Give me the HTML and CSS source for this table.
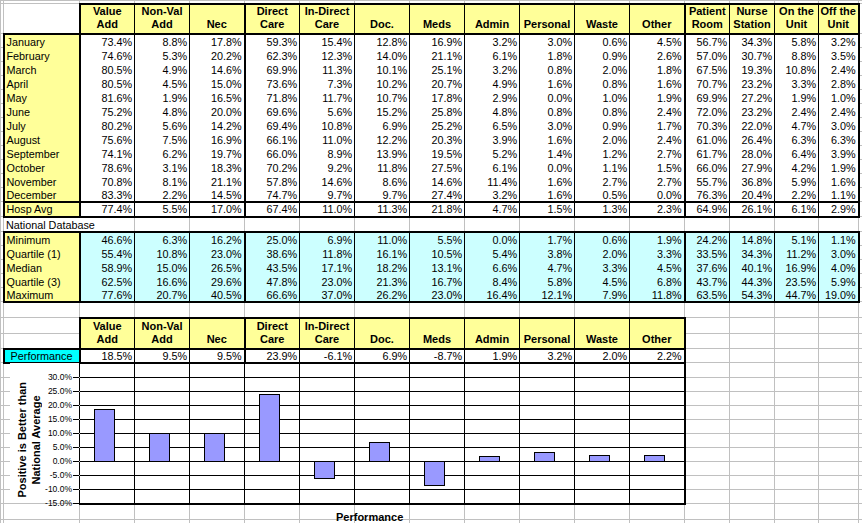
FILE: index.html
```html
<!DOCTYPE html>
<html>
<head>
<meta charset="utf-8">
<link rel="stylesheet" href="styles.css">
</head>
<body>
<div class="sheet">
<table class="grid">
<colgroup><col class="c0"><col class="ca"><col class="cb"><col class="cb"><col class="cb"><col class="cb"><col class="cb"><col class="cb"><col class="cb"><col class="cb"><col class="cb"><col class="cb"><col class="cb"><col class="cm"><col class="cm"><col class="co"><col class="cp"><col class="cq"></colgroup>
<tr class="r0"><td></td><td></td><td></td><td></td><td></td><td></td><td></td><td></td><td></td><td></td><td></td><td></td><td></td><td></td><td></td><td></td><td></td><td></td></tr>
<tr class="h1"><td></td><td></td><td class="h k">Value<br>Add</td><td class="h">Non-Val<br>Add</td><td class="h">Nec</td><td class="h k">Direct<br>Care</td><td class="h">In-Direct<br>Care</td><td class="h">Doc.</td><td class="h">Meds</td><td class="h">Admin</td><td class="h">Personal</td><td class="h">Waste</td><td class="h">Other</td><td class="h k">Patient<br>Room</td><td class="h">Nurse<br>Station</td><td class="h">On the<br>Unit</td><td class="h e">Off the<br>Unit</td><td></td></tr>
<tr class="rm first"><td></td><td class="lab">January</td><td class="n">73.4%</td><td class="n">8.8%</td><td class="n">17.8%</td><td class="n k">59.3%</td><td class="n">15.4%</td><td class="n">12.8%</td><td class="n">16.9%</td><td class="n">3.2%</td><td class="n">3.0%</td><td class="n">0.6%</td><td class="n">4.5%</td><td class="n k">56.7%</td><td class="n">34.3%</td><td class="n">5.8%</td><td class="n e">3.2%</td><td></td></tr>
<tr class="rm"><td></td><td class="lab">February</td><td class="n">74.6%</td><td class="n">5.3%</td><td class="n">20.2%</td><td class="n k">62.3%</td><td class="n">12.3%</td><td class="n">14.0%</td><td class="n">21.1%</td><td class="n">6.1%</td><td class="n">1.8%</td><td class="n">0.9%</td><td class="n">2.6%</td><td class="n k">57.0%</td><td class="n">30.7%</td><td class="n">8.8%</td><td class="n e">3.5%</td><td></td></tr>
<tr class="rm"><td></td><td class="lab">March</td><td class="n">80.5%</td><td class="n">4.9%</td><td class="n">14.6%</td><td class="n k">69.9%</td><td class="n">11.3%</td><td class="n">10.1%</td><td class="n">25.1%</td><td class="n">3.2%</td><td class="n">0.8%</td><td class="n">2.0%</td><td class="n">1.8%</td><td class="n k">67.5%</td><td class="n">19.3%</td><td class="n">10.8%</td><td class="n e">2.4%</td><td></td></tr>
<tr class="rm"><td></td><td class="lab">April</td><td class="n">80.5%</td><td class="n">4.5%</td><td class="n">15.0%</td><td class="n k">73.6%</td><td class="n">7.3%</td><td class="n">10.2%</td><td class="n">20.7%</td><td class="n">4.9%</td><td class="n">1.6%</td><td class="n">0.8%</td><td class="n">1.6%</td><td class="n k">70.7%</td><td class="n">23.2%</td><td class="n">3.3%</td><td class="n e">2.8%</td><td></td></tr>
<tr class="rm"><td></td><td class="lab">May</td><td class="n">81.6%</td><td class="n">1.9%</td><td class="n">16.5%</td><td class="n k">71.8%</td><td class="n">11.7%</td><td class="n">10.7%</td><td class="n">17.8%</td><td class="n">2.9%</td><td class="n">0.0%</td><td class="n">1.0%</td><td class="n">1.9%</td><td class="n k">69.9%</td><td class="n">27.2%</td><td class="n">1.9%</td><td class="n e">1.0%</td><td></td></tr>
<tr class="rm"><td></td><td class="lab">June</td><td class="n">75.2%</td><td class="n">4.8%</td><td class="n">20.0%</td><td class="n k">69.6%</td><td class="n">5.6%</td><td class="n">15.2%</td><td class="n">25.8%</td><td class="n">4.8%</td><td class="n">0.8%</td><td class="n">0.8%</td><td class="n">2.4%</td><td class="n k">72.0%</td><td class="n">23.2%</td><td class="n">2.4%</td><td class="n e">2.4%</td><td></td></tr>
<tr class="rm"><td></td><td class="lab">July</td><td class="n">80.2%</td><td class="n">5.6%</td><td class="n">14.2%</td><td class="n k">69.4%</td><td class="n">10.8%</td><td class="n">6.9%</td><td class="n">25.2%</td><td class="n">6.5%</td><td class="n">3.0%</td><td class="n">0.9%</td><td class="n">1.7%</td><td class="n k">70.3%</td><td class="n">22.0%</td><td class="n">4.7%</td><td class="n e">3.0%</td><td></td></tr>
<tr class="rm"><td></td><td class="lab">August</td><td class="n">75.6%</td><td class="n">7.5%</td><td class="n">16.9%</td><td class="n k">66.1%</td><td class="n">11.0%</td><td class="n">12.2%</td><td class="n">20.3%</td><td class="n">3.9%</td><td class="n">1.6%</td><td class="n">2.0%</td><td class="n">2.4%</td><td class="n k">61.0%</td><td class="n">26.4%</td><td class="n">6.3%</td><td class="n e">6.3%</td><td></td></tr>
<tr class="rm"><td></td><td class="lab">September</td><td class="n">74.1%</td><td class="n">6.2%</td><td class="n">19.7%</td><td class="n k">66.0%</td><td class="n">8.9%</td><td class="n">13.9%</td><td class="n">19.5%</td><td class="n">5.2%</td><td class="n">1.4%</td><td class="n">1.2%</td><td class="n">2.7%</td><td class="n k">61.7%</td><td class="n">28.0%</td><td class="n">6.4%</td><td class="n e">3.9%</td><td></td></tr>
<tr class="rm"><td></td><td class="lab">October</td><td class="n">78.6%</td><td class="n">3.1%</td><td class="n">18.3%</td><td class="n k">70.2%</td><td class="n">9.2%</td><td class="n">11.8%</td><td class="n">27.5%</td><td class="n">6.1%</td><td class="n">0.0%</td><td class="n">1.1%</td><td class="n">1.5%</td><td class="n k">66.0%</td><td class="n">27.9%</td><td class="n">4.2%</td><td class="n e">1.9%</td><td></td></tr>
<tr class="rm"><td></td><td class="lab">November</td><td class="n">70.8%</td><td class="n">8.1%</td><td class="n">21.1%</td><td class="n k">57.8%</td><td class="n">14.6%</td><td class="n">8.6%</td><td class="n">14.6%</td><td class="n">11.4%</td><td class="n">1.6%</td><td class="n">2.7%</td><td class="n">2.7%</td><td class="n k">55.7%</td><td class="n">36.8%</td><td class="n">5.9%</td><td class="n e">1.6%</td><td></td></tr>
<tr class="rm last"><td></td><td class="lab">December</td><td class="n">83.3%</td><td class="n">2.2%</td><td class="n">14.5%</td><td class="n k">74.7%</td><td class="n">9.7%</td><td class="n">9.7%</td><td class="n">27.4%</td><td class="n">3.2%</td><td class="n">1.6%</td><td class="n">0.5%</td><td class="n">0.0%</td><td class="n k">76.3%</td><td class="n">20.4%</td><td class="n">2.2%</td><td class="n e">1.1%</td><td></td></tr>
<tr class="avg first last"><td></td><td class="lab">Hosp Avg</td><td class="n">77.4%</td><td class="n">5.5%</td><td class="n">17.0%</td><td class="n k">67.4%</td><td class="n">11.0%</td><td class="n">11.3%</td><td class="n">21.8%</td><td class="n">4.7%</td><td class="n">1.5%</td><td class="n">1.3%</td><td class="n">2.3%</td><td class="n k">64.9%</td><td class="n">26.1%</td><td class="n">6.1%</td><td class="n e">2.9%</td><td></td></tr>
<tr class="ndb"><td></td><td colspan="2" class="t">National Database</td><td></td><td></td><td></td><td></td><td></td><td></td><td></td><td></td><td></td><td></td><td></td><td></td><td></td><td></td><td></td></tr>
<tr class="nat first"><td></td><td class="lab">Minimum</td><td class="n">46.6%</td><td class="n">6.3%</td><td class="n">16.2%</td><td class="n k">25.0%</td><td class="n">6.9%</td><td class="n">11.0%</td><td class="n">5.5%</td><td class="n">0.0%</td><td class="n">1.7%</td><td class="n">0.6%</td><td class="n">1.9%</td><td class="n k">24.2%</td><td class="n">14.8%</td><td class="n">5.1%</td><td class="n e">1.1%</td><td></td></tr>
<tr class="nat"><td></td><td class="lab">Quartile (1)</td><td class="n">55.4%</td><td class="n">10.8%</td><td class="n">23.0%</td><td class="n k">38.6%</td><td class="n">11.8%</td><td class="n">16.1%</td><td class="n">10.5%</td><td class="n">5.4%</td><td class="n">3.8%</td><td class="n">2.0%</td><td class="n">3.3%</td><td class="n k">33.5%</td><td class="n">34.3%</td><td class="n">11.2%</td><td class="n e">3.0%</td><td></td></tr>
<tr class="nat"><td></td><td class="lab">Median</td><td class="n">58.9%</td><td class="n">15.0%</td><td class="n">26.5%</td><td class="n k">43.5%</td><td class="n">17.1%</td><td class="n">18.2%</td><td class="n">13.1%</td><td class="n">6.6%</td><td class="n">4.7%</td><td class="n">3.3%</td><td class="n">4.5%</td><td class="n k">37.6%</td><td class="n">40.1%</td><td class="n">16.9%</td><td class="n e">4.0%</td><td></td></tr>
<tr class="nat"><td></td><td class="lab">Quartile (3)</td><td class="n">62.5%</td><td class="n">16.6%</td><td class="n">29.6%</td><td class="n k">47.8%</td><td class="n">23.0%</td><td class="n">21.3%</td><td class="n">16.7%</td><td class="n">8.4%</td><td class="n">5.8%</td><td class="n">4.5%</td><td class="n">6.8%</td><td class="n k">43.7%</td><td class="n">44.3%</td><td class="n">23.5%</td><td class="n e">5.9%</td><td></td></tr>
<tr class="nat last"><td></td><td class="lab">Maximum</td><td class="n">77.6%</td><td class="n">20.7%</td><td class="n">40.5%</td><td class="n k">66.6%</td><td class="n">37.0%</td><td class="n">26.2%</td><td class="n">23.0%</td><td class="n">16.4%</td><td class="n">12.1%</td><td class="n">7.9%</td><td class="n">11.8%</td><td class="n k">63.5%</td><td class="n">54.3%</td><td class="n">44.7%</td><td class="n e">19.0%</td><td></td></tr>
<tr class="blank"><td></td><td></td><td></td><td></td><td></td><td></td><td></td><td></td><td></td><td></td><td></td><td></td><td></td><td></td><td></td><td></td><td></td><td></td></tr>
<tr class="h2a"><td></td><td></td><td rowspan="2" class="h k">Value<br>Add</td><td rowspan="2" class="h">Non-Val<br>Add</td><td rowspan="2" class="h">Nec</td><td rowspan="2" class="h k">Direct<br>Care</td><td rowspan="2" class="h">In-Direct<br>Care</td><td rowspan="2" class="h">Doc.</td><td rowspan="2" class="h">Meds</td><td rowspan="2" class="h">Admin</td><td rowspan="2" class="h">Personal</td><td rowspan="2" class="h">Waste</td><td rowspan="2" class="h e">Other</td><td></td><td></td><td></td><td></td><td></td></tr>
<tr class="h2b"><td></td><td></td><td></td><td></td><td></td><td></td><td></td></tr>
<tr class="pfr"><td></td><td class="pf">Performance</td><td class="n">18.5%</td><td class="n">9.5%</td><td class="n">9.5%</td><td class="n k">23.9%</td><td class="n">-6.1%</td><td class="n">6.9%</td><td class="n">-8.7%</td><td class="n">1.9%</td><td class="n">3.2%</td><td class="n">2.0%</td><td class="n e">2.2%</td><td></td><td></td><td></td><td></td><td></td></tr>
<tr class="cr0"><td></td><td class="ax"></td><td class="cb"></td><td class="cb"></td><td class="cb"></td><td class="cb"></td><td class="cb"></td><td class="cb"></td><td class="cb"></td><td class="cb"></td><td class="cb"></td><td class="cb"></td><td class="cb e"></td><td></td><td></td><td></td><td></td><td></td></tr>
<tr class="cr"><td></td><td class="ax"></td><td class="cb"></td><td class="cb"></td><td class="cb"></td><td class="cb"></td><td class="cb"></td><td class="cb"></td><td class="cb"></td><td class="cb"></td><td class="cb"></td><td class="cb"></td><td class="cb e"></td><td></td><td></td><td></td><td></td><td></td></tr>
<tr class="cr"><td></td><td class="ax"></td><td class="cb"></td><td class="cb"></td><td class="cb"></td><td class="cb"></td><td class="cb"></td><td class="cb"></td><td class="cb"></td><td class="cb"></td><td class="cb"></td><td class="cb"></td><td class="cb e"></td><td></td><td></td><td></td><td></td><td></td></tr>
<tr class="cr"><td></td><td class="ax"></td><td class="cb"></td><td class="cb"></td><td class="cb"></td><td class="cb"></td><td class="cb"></td><td class="cb"></td><td class="cb"></td><td class="cb"></td><td class="cb"></td><td class="cb"></td><td class="cb e"></td><td></td><td></td><td></td><td></td><td></td></tr>
<tr class="cr"><td></td><td class="ax"></td><td class="cb"></td><td class="cb"></td><td class="cb"></td><td class="cb"></td><td class="cb"></td><td class="cb"></td><td class="cb"></td><td class="cb"></td><td class="cb"></td><td class="cb"></td><td class="cb e"></td><td></td><td></td><td></td><td></td><td></td></tr>
<tr class="cr"><td></td><td class="ax"></td><td class="cb"></td><td class="cb"></td><td class="cb"></td><td class="cb"></td><td class="cb"></td><td class="cb"></td><td class="cb"></td><td class="cb"></td><td class="cb"></td><td class="cb"></td><td class="cb e"></td><td></td><td></td><td></td><td></td><td></td></tr>
<tr class="cr"><td></td><td class="ax"></td><td class="cb"></td><td class="cb"></td><td class="cb"></td><td class="cb"></td><td class="cb"></td><td class="cb"></td><td class="cb"></td><td class="cb"></td><td class="cb"></td><td class="cb"></td><td class="cb e"></td><td></td><td></td><td></td><td></td><td></td></tr>
<tr class="cr"><td></td><td class="ax"></td><td class="cb"></td><td class="cb"></td><td class="cb"></td><td class="cb"></td><td class="cb"></td><td class="cb"></td><td class="cb"></td><td class="cb"></td><td class="cb"></td><td class="cb"></td><td class="cb e"></td><td></td><td></td><td></td><td></td><td></td></tr>
<tr class="cr"><td></td><td class="ax"></td><td class="cb"></td><td class="cb"></td><td class="cb"></td><td class="cb"></td><td class="cb"></td><td class="cb"></td><td class="cb"></td><td class="cb"></td><td class="cb"></td><td class="cb"></td><td class="cb e"></td><td></td><td></td><td></td><td></td><td></td></tr>
<tr class="cr cl"><td></td><td class="ax"></td><td class="cb"></td><td class="cb"></td><td class="cb"></td><td class="cb"></td><td class="cb"></td><td class="cb"></td><td class="cb"></td><td class="cb"></td><td class="cb"></td><td class="cb"></td><td class="cb e"></td><td></td><td></td><td></td><td></td><td></td></tr>
<tr class="tail"><td></td><td></td><td></td><td></td><td></td><td></td><td></td><td></td><td></td><td></td><td></td><td></td><td></td><td></td><td></td><td></td><td></td><td></td></tr>
<tr class="tail2"><td></td><td></td><td></td><td></td><td></td><td></td><td></td><td></td><td></td><td></td><td></td><td></td><td></td><td></td><td></td><td></td><td></td><td></td></tr>
</table>

<div class="chart">
  <div class="chart-body">
    <div class="axis">
      <div class="ytitle">Positive is Better than<br>National Average</div>
      <div class="ylabels">
        <span>30.0%</span><span>25.0%</span><span>20.0%</span><span>15.0%</span><span>10.0%</span><span>5.0%</span><span>0.0%</span><span>-5.0%</span><span>-10.0%</span><span>-15.0%</span>
      </div>
    </div>
    <div class="plot">
      <div class="slot"><div class="bar" style="top:32px;height:53px"></div></div>
      <div class="slot"><div class="bar" style="top:56px;height:29px"></div></div>
      <div class="slot"><div class="bar" style="top:56px;height:29px"></div></div>
      <div class="slot"><div class="bar" style="top:17px;height:68px"></div></div>
      <div class="slot"><div class="bar" style="top:84px;height:18px"></div></div>
      <div class="slot"><div class="bar" style="top:65px;height:20px"></div></div>
      <div class="slot"><div class="bar" style="top:84px;height:25px"></div></div>
      <div class="slot"><div class="bar" style="top:79px;height:6px"></div></div>
      <div class="slot"><div class="bar" style="top:75px;height:10px"></div></div>
      <div class="slot"><div class="bar" style="top:78px;height:7px"></div></div>
      <div class="slot"><div class="bar" style="top:78px;height:7px"></div></div>
    </div>
  </div>
  <div class="xtitle">Performance</div>
</div>
</div>
</body>
</html>
```

FILE: styles.css
```css
* { box-sizing: border-box; }
html, body { margin: 0; padding: 0; background: #fff; }
body { width: 862px; height: 523px; overflow: hidden; font-family: "Liberation Sans", Arial, sans-serif; color: #000; }
.sheet { position: relative; width: 862px; height: 523px; overflow: hidden; }

.grid { border-collapse: collapse; table-layout: fixed; width: 868px; font-size: 10.8px; }
.c0 { width: 3px; }
.ca { width: 76px; }
.cb { width: 55px; }
.cm { width: 45px; }
.co { width: 44px; }
.cp { width: 40px; }
.cq { width: 10px; }

.grid td { border: 1px solid #c0c0c0; padding: 0; line-height: 12px; white-space: nowrap; vertical-align: bottom; overflow: hidden; }

.r0 { height: 3px; }
.h1 { height: 30px; }
.rm { height: 14px; }
.avg { height: 15px; }
.ndb { height: 15px; }
.nat { height: 14px; }
.blank { height: 16px; }
.h2a { height: 16px; }
.h2b { height: 15px; }
.pfr { height: 14px; }
.cr0 { height: 15px; }
.cr { height: 14px; }
.tail { height: 16px; }
.tail2 { height: 14px; }

.grid td.h { background: #ffff99; font-weight: bold; font-size: 11px; text-align: center; line-height: 13.5px; padding-bottom: 1px; border-top: 2px solid #000; border-bottom: 2px solid #000; border-left: 1px solid #000; border-right: 1px solid #000; }
.grid td.lab { background: #ffff99; text-align: left; padding-left: 2px; border-left: 2px solid #000; border-right: 2px solid #000; border-top: none; border-bottom: none; }
.grid td.n { background: #fff; text-align: right; padding-right: 2px; border-left: 1px solid #000; border-right: 1px solid #000; border-top: none; border-bottom: none; }
.grid td.t { text-align: left; padding-left: 2px; overflow: visible; }
.grid td.pf { background: #00ffff; text-align: center; border: 2px solid #000; }
.grid td.cb { border: 1px solid #000; }
.grid td.ax { border-right: 1px solid #000; }

.grid tr.first td.lab, .grid tr.first td.n { border-top: 2px solid #000; }
.grid tr.last td.lab, .grid tr.last td.n { border-bottom: 2px solid #000; }
.grid tr.avg td { vertical-align: middle; }
.grid tr.nat td.n { background: #ccffff; }
.grid tr.pfr td.n { border-bottom: 2px solid #000; }
.grid tr.cl td.cb { border-bottom: 2px solid #000; }

.grid td.k { border-left: 2px solid #000; }
.grid td.e { border-right: 2px solid #000; }

.chart { position: absolute; left: 10px; top: 363px; width: 674px; height: 160px; }
.chart-body { display: flex; height: 140px; }
.axis { width: 69px; height: 140px; background: #fff; display: flex; align-items: flex-start; }
.ytitle { writing-mode: vertical-rl; transform: rotate(180deg); align-self: center; margin-top: 14px; margin-left: 5px; width: 28px; font-weight: bold; font-size: 11px; line-height: 14px; text-align: center; white-space: nowrap; }
.ylabels { margin-top: 7px; width: 36px; display: flex; flex-direction: column; }
.ylabels span { height: 14px; font-size: 8.5px; line-height: 14px; display: flex; justify-content: flex-end; align-items: center; white-space: nowrap; }
.ylabels span::after { content: ""; width: 6px; height: 1px; background: #000; margin-left: 1px; }
.plot { display: flex; margin-top: 14px; height: 126px; width: 605px; }
.slot { width: 55px; flex: none; position: relative; }
.bar { position: absolute; left: 15px; width: 21px; background: #9999ff; border: 1px solid #000; }
.xtitle { margin: 7px 0 0 326px; font-weight: bold; font-size: 11px; line-height: 14px; white-space: nowrap; }
```
